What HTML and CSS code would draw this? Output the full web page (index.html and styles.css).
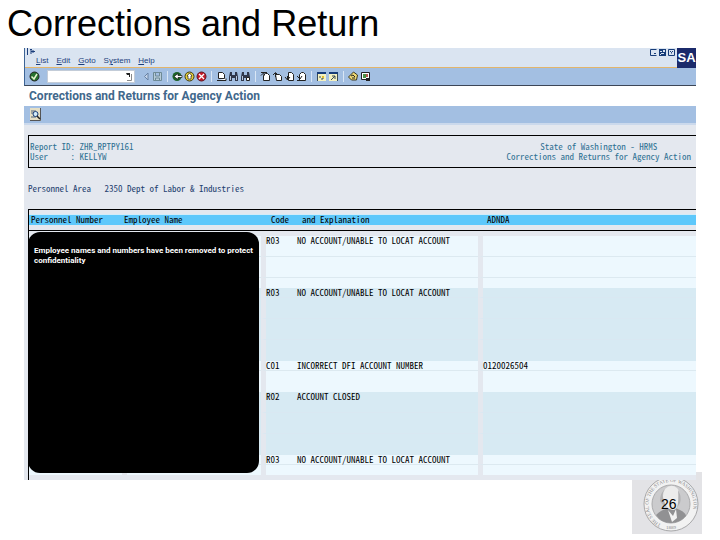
FILE: index.html
```html
<!DOCTYPE html>
<html lang="en">
<head>
    <meta charset="UTF-8">
    <meta name="viewport" content="width=device-width, initial-scale=1.0">
    <title>Corrections and Return</title>
    <link rel="stylesheet" href="styles.css">
</head>
<body>
    <h1 class="slide-title">Corrections and Return</h1>

    <div class="app">
        <div class="top">
            <div class="menu-bar">
                <svg class="menu-icon" viewBox="0 0 10 7"><path d="M1.500 0v7M4 1.500h2M5 3.500h4M5 2v4M7 2v3" stroke="#1d3f7c" fill="none"/></svg>
                <nav class="menu">
                    <a href="#"><u>L</u>ist</a>
                    <a href="#"><u>E</u>dit</a>
                    <a href="#"><u>G</u>oto</a>
                    <a href="#">S<u>y</u>stem</a>
                    <a href="#"><u>H</u>elp</a>
                </nav>
            </div>
            <div class="window-buttons">
                <button aria-label="Minimize"><svg viewBox="0 0 7 7"><path d="M6.500 .5h-6v6h6M4 4.500h2" stroke="#173c78" fill="none"/></svg></button>
                <button aria-label="Restore"><svg viewBox="0 0 7 7"><path d="M0 0h7v7H0z" fill="#173c78"/><path d="M1 2h2v1H1zM4 1h2v2H4zM2 4h3v1H2zM1 5h1v1H1z" fill="#dae4f1"/></svg></button>
                <button aria-label="Close"><svg viewBox="0 0 7 7"><path d="M.5.5h6v6h-6zM2 2l1.500 1.500L5 2M3.500 3.500v1" stroke="#173c78" fill="none"/></svg></button>
            </div>
            <div class="logo">SA</div>
        </div>

        <div class="toolbar">
            <button aria-label="Enter"><svg viewBox="0 0 11 11"><circle cx="5.500" cy="5.500" r="4.500" fill="#26722f" stroke="#222"/><path d="M2.500 5.500l2.500 2.500 3-5" stroke="#e8f4d0" stroke-width="1.500" fill="none"/></svg></button>
            <div class="command">
                <input type="text" aria-label="Command">
                <svg viewBox="0 0 6 8"><path d="M0 0h4v4H3V2H1z" fill="#222"/><path d="M5.500 1v6.500H1" stroke="#888" fill="none"/></svg>
            </div>
            <div class="group back-group">
                <button aria-label="Collapse"><svg viewBox="0 0 11 11"><path d="M8 2v7L4.500 5.500z" fill="#c5d5ea" stroke="#6882a4"/></svg></button>
                <button aria-label="Save"><svg viewBox="0 0 11 11"><path d="M1.500 1.500h8v8h-8zM3.500 2v3h4V2M3.500 9V7h4v2" fill="#b7cbd8" stroke="#6d8a96"/></svg></button>
            </div>
            <div class="group">
                <button aria-label="Back"><svg viewBox="0 0 11 11"><circle cx="5" cy="5.500" r="4.500" fill="#1d6328"/><path d="M2 5.500l4-3v2h4v2H6v2z" fill="#fff" stroke="#111" stroke-width=".7"/></svg></button>
                <button aria-label="Exit"><svg viewBox="0 0 11 11"><circle cx="5.500" cy="5.500" r="4.500" fill="#e6cf3a" stroke="#3c3813"/><path d="M3 5l2.500-3L8 5H7v3H4V5z" fill="#fff" stroke="#222" stroke-width=".7"/></svg></button>
                <button aria-label="Cancel"><svg viewBox="0 0 11 11"><circle cx="5.500" cy="5.500" r="4.500" fill="#c41c2b" stroke="#5d1520"/><path d="M3 3l5 5M8 3L3 8" stroke="#fff" stroke-width="1.300"/></svg></button>
            </div>
            <div class="group">
                <button aria-label="Print"><svg viewBox="0 0 11 11"><path d="M2.500 1.500h4l2 2v4h-6zM1 9.500h9v-2" fill="#fff" stroke="#222"/></svg></button>
                <button aria-label="Find"><svg viewBox="0 0 11 11"><path d="M2 1h2v3h3V1h2l1 5v4H7V7H4v3H1V6z" fill="#30384c"/><path d="M2.500 5v4M8.500 5v4" stroke="#b9c9dd"/></svg></button>
                <button aria-label="Find next"><svg viewBox="0 0 11 11"><path d="M2 1h2v3h3V1h2l1 5v1H4v3H1V6z" fill="#30384c"/><path d="M2.500 5v4" stroke="#b9c9dd"/><path d="M6.500 6.500h3v3h-3z" fill="#fff" stroke="#222"/></svg></button>
            </div>
            <div class="group">
                <button aria-label="First page"><svg viewBox="0 0 11 11"><path d="M3.500 4.500l2-2h2l2 2v5h-6z" fill="#fff" stroke="#222"/><path d="M1 4.500l3-3M1 1.500h6M4 1v4" stroke="#222" fill="none"/></svg></button>
                <button aria-label="Previous page"><svg viewBox="0 0 11 11"><path d="M3.500 3.500h4l2 2v4h-5z" fill="#fff" stroke="#222"/><path d="M1 4l2.500-2.500L6 4M3.500 2v4" stroke="#222" fill="none"/></svg></button>
                <button aria-label="Next page"><svg viewBox="0 0 11 11"><path d="M4.500 1.500h3l2 2v6h-5z" fill="#fff" stroke="#222"/><path d="M1 6l2.500 3L6 6M3.500 5v4" stroke="#222" fill="none"/></svg></button>
                <button aria-label="Last page"><svg viewBox="0 0 11 11"><path d="M3.500 3.500l2-2h2l2 2v6h-6z" fill="#fff" stroke="#222"/><path d="M1 5l3 3 2-3M1 9.500h5" stroke="#222" fill="none"/></svg></button>
            </div>
            <div class="group">
                <button aria-label="New session"><svg viewBox="0 0 11 11"><path d="M1 1h9v9H1z" fill="#f4f1c0"/><path d="M1 1h9v2H1z" fill="#173c78"/><path d="M1.500 3v7M3 6h2M7 5v3M5 8h2" stroke="#3b4a55"/><path d="M6 5h2v2H6z" fill="#e0bf2c"/></svg></button>
                <button aria-label="Create shortcut"><svg viewBox="0 0 11 11"><path d="M1 1h9v9H1z" fill="#f4f1c0"/><path d="M1 1h9v2H1z" fill="#173c78"/><path d="M9.500 3v7M3 9l4-4M4 5h3v3" stroke="#3b4a55" fill="none"/></svg></button>
            </div>
            <div class="group">
                <button aria-label="Help"><svg viewBox="0 0 11 11"><path d="M5.500 1l4 3-1 5h-5l-3-3z" fill="#eed874" stroke="#3b3820"/><path d="M3 5l2-1 2 2M4 7h3" stroke="#222" fill="none"/></svg></button>
                <button aria-label="Layout"><svg viewBox="0 0 11 11"><path d="M1.500 1.500h8v7h-8z" fill="#fff" stroke="#222"/><path d="M3 3h3v4H3z" fill="#4a9145"/><path d="M6 3h2v3H6z" fill="#b55b50"/><path d="M6 7h4v3H6z" fill="#222"/></svg></button>
            </div>
        </div>

        <h2 class="screen-title">Corrections and Returns for Agency Action</h2>

        <div class="action-bar">
            <button aria-label="Details"><svg viewBox="0 0 11 13"><path d="M0 0h11v13H0z" fill="#e5dfc5"/><path d="M0 12.500h10.500V0" stroke="#555" fill="none"/><path d="M1 3h5M1 5h2M1 9h5" stroke="#53677d"/><circle cx="5.500" cy="6" r="2.500" fill="#d2ebf8" stroke="#173c78"/><path d="M7 8l3 3" stroke="#222" stroke-width="1.500"/></svg></button>
        </div>

        <div class="report">
            <div class="report-head">
                <pre>Report ID: ZHR_RPTPY161
User     : KELLYW</pre>
                <pre class="centered">State of Washington - HRMS
Corrections and Returns for Agency Action</pre>
            </div>

            <pre class="area">Personnel Area   2350 Dept of Labor &amp; Industries</pre>

            <div class="list">
                <table>
                    <colgroup>
                        <col class="col-number">
                        <col class="col-name">
                        <col class="col-code">
                        <col class="col-text">
                        <col>
                    </colgroup>
                    <thead>
                        <tr><th>Personnel Number</th><th>Employee Name</th><th>Code</th><th>and Explanation</th><th>ADNDA</th></tr>
                    </thead>
                    <tbody class="light first">
                        <tr class="tall"><td></td><td></td><td>R03</td><td>NO ACCOUNT/UNABLE TO LOCAT ACCOUNT</td><td></td></tr>
                        <tr class="tall"><td></td><td></td><td></td><td></td><td></td></tr>
                        <tr><td></td><td></td><td></td><td></td><td></td></tr>
                    </tbody>
                    <tbody class="dark">
                        <tr><td></td><td></td><td>R03</td><td>NO ACCOUNT/UNABLE TO LOCAT ACCOUNT</td><td></td></tr>
                        <tr class="tall"><td></td><td></td><td></td><td></td><td></td></tr>
                        <tr class="tall"><td></td><td></td><td></td><td></td><td></td></tr>
                        <tr class="tall"><td></td><td></td><td></td><td></td><td></td></tr>
                    </tbody>
                    <tbody class="light">
                        <tr><td></td><td></td><td>C01</td><td>INCORRECT DFI ACCOUNT NUMBER</td><td>0120026504</td></tr>
                        <tr class="tall"><td></td><td></td><td></td><td></td><td></td></tr>
                    </tbody>
                    <tbody class="dark">
                        <tr class="tall"><td></td><td></td><td>R02</td><td>ACCOUNT CLOSED</td><td></td></tr>
                        <tr class="tall"><td></td><td></td><td></td><td></td><td></td></tr>
                        <tr class="tall"><td></td><td></td><td></td><td></td><td></td></tr>
                    </tbody>
                    <tbody class="light">
                        <tr><td></td><td></td><td>R03</td><td>NO ACCOUNT/UNABLE TO LOCAT ACCOUNT</td><td></td></tr>
                        <tr><td></td><td></td><td></td><td></td><td></td></tr>
                    </tbody>
                </table>
                <div class="redacted">Employee names and numbers have been removed to protect confidentiality</div>
            </div>
        </div>
    </div>

    <div class="slide-number">
        <svg class="seal" viewBox="0 0 70 62">
            <circle cx="39" cy="32" r="27" fill="#f2f2f2" stroke="#a8a8aa"/>
            <circle cx="39" cy="32" r="19" fill="#cbcbcd" stroke="#aaaaac"/>
            <path id="ring" d="M29 52.500a22.500 22.500 0 1 1 20 0" fill="none"/>
            <text class="seal-text"><textPath href="#ring">THE SEAL OF THE STATE OF WASHINGTON</textPath></text>
            <text class="seal-text" x="34" y="57">1889</text>
            <path d="M24 43q5-5 10-6l9-1q10 3 11 8-6 7-15 7-10 0-15-8z" fill="#919193"/>
            <path d="M33 17q6-6 12-1 4 4 2 12-1 8-5 10-6 0-9-6-4-9 0-15z" fill="#ececec"/>
            <path d="M33 17q-4 5-1 12l2 5q-4-1-6-5 0-8 5-12zM46 18q4 6 2 13l-3 5q2-7 1-18z" fill="#b2b2b4"/>
            <path d="M36 38l5 6 3-7 1 9-5 4z" fill="#f2f2f2"/>
        </svg>
        <span>26</span>
    </div>
</body>
</html>
```
FILE: styles.css
```css
* {
    box-sizing: border-box;
}

body {
    margin: 0;
    background-color: #fff;
    font-family: "Liberation Sans", Arial, sans-serif;
}

button {
    display: block;
    padding: 0;
    border: none;
    background: none;
}

svg {
    display: block;
}

.slide-title {
    margin: 0;
    padding: 2px 7px;
    font-size: 36px;
    font-weight: normal;
    line-height: 44px;
    color: #000;
}

.app {
    position: relative;
    z-index: 1;
    margin: 0 24px;
    background-color: #e4e8ef;
}

/* menu bar and toolbar */
.top {
    display: flex;
    height: 20px;
    background-color: #dae4f1;
    border-left: 1px solid #3d6496;
}

.menu-bar {
    flex: 1;
    border-bottom: 1px solid #e2b56c;
}

.menu-icon {
    width: 10px;
    height: 7px;
    margin-left: 1px;
}

.menu {
    display: flex;
    gap: 8px;
    padding-left: 11px;
    font-size: 8px;
    line-height: 12px;
}

.menu a {
    color: #1d3f7c;
    text-decoration: none;
}

.window-buttons {
    display: flex;
    align-items: flex-start;
    gap: 2px;
    padding: 1px 2px 0 0;
    border-bottom: 1px solid #e2b56c;
}

.window-buttons svg {
    width: 7px;
    height: 7px;
}

.logo {
    width: 19px;
    background-color: #1b2a6b;
    color: #fff;
    font-size: 13px;
    font-weight: bold;
    line-height: 19px;
    text-align: center;
}

.toolbar {
    display: flex;
    align-items: center;
    height: 18px;
    padding-left: 4px;
    background-color: #a3bfe2;
    border-left: 1px solid #3d6496;
    border-bottom: 1px solid #3c4656;
}

.toolbar button svg {
    width: 11px;
    height: 11px;
}

.command {
    display: flex;
    align-items: center;
    width: 88px;
    height: 13px;
    margin-left: 7px;
    padding-right: 2px;
    background-color: #fff;
    border: 1px solid #c3ccd8;
}

.command input {
    flex: 1;
    min-width: 0;
    height: 10px;
    padding: 0;
    border: none;
    outline: none;
    font-size: 9px;
}

.command svg {
    width: 6px;
    height: 8px;
}

.group {
    display: flex;
    gap: 1px;
    padding-left: 4px;
    margin-left: 4px;
    border-left: 1px solid #d9e6f5;
}

.back-group {
    border-left: none;
    margin-left: 0;
    padding-left: 5px;
}

.screen-title {
    margin: 0;
    padding-left: 5px;
    background-color: #fff;
    color: #41688c;
    font-family: Roboto, "Liberation Sans", sans-serif;
    font-size: 12px;
    font-weight: bold;
    line-height: 20px;
}

.action-bar {
    height: 19px;
    padding: 2px 6px;
    background-color: #a3bfe2;
    border-bottom: 2px solid #cbd9ec;
}

.action-bar svg {
    width: 11px;
    height: 13px;
}

/* report list */
.report {
    padding: 10px 0 0 4px;
    color: #000;
    font-family: "Noto Sans CJK JP", "Liberation Mono", monospace;
    font-feature-settings: "hwid";
    font-size: 9px;
    line-height: 10px;
}

.report pre {
    margin: 0;
    font: inherit;
}

.report-head {
    display: flex;
    justify-content: space-between;
    height: 33px;
    padding: 6px 5px 0 1px;
    border: 1px solid #000;
    border-right: none;
    color: #2f7193;
}

.report .centered {
    text-align: center;
}

.report .area {
    padding: 16px 0 15px;
    color: #1f3f6f;
}

.list {
    position: relative;
    padding-bottom: 5px;
    border-left: 1px solid #000;
}

table {
    width: 100%;
    table-layout: fixed;
    border-spacing: 0;
}

.col-number {
    width: 93px;
}

.col-name {
    width: 139px;
}

.col-code {
    width: 36px;
}

.col-text {
    width: 181px;
}

th {
    height: 22px;
    padding: 0 0 0 2px;
    border-top: 1px solid #000;
    border-bottom: 1px solid #000;
    background: linear-gradient(#e4e8ef 4px, #d3ecf8 4px, #d3ecf8 5px, #5ec8fb 5px, #5ec8fb 15px, #e4e8ef 15px);
    font-weight: normal;
    text-align: left;
    white-space: nowrap;
}

th:nth-child(3) {
    padding-left: 10px;
}

th:nth-child(4) {
    padding-left: 5px;
}

th:nth-child(5) {
    padding-left: 9px;
}

td {
    height: 10px;
    padding: 0;
    border-bottom: 1px solid #dce9f0;
    vertical-align: top;
    white-space: nowrap;
    line-height: 9px;
}

.tall td {
    height: 21px;
}

.light td {
    background-color: #edf8fe;
}

.dark td {
    background-color: #d7eaf3;
    border-bottom-color: #d9e8f2;
}

tbody tr:last-child td {
    border-bottom: none;
}

td:nth-child(2),
td:nth-child(3),
td:nth-child(5) {
    border-left: 5px solid #e4e8ef;
}

.first tr:first-child td {
    height: 26px;
    border-top: 5px solid #e4e8ef;
}

.redacted {
    position: absolute;
    top: 23px;
    left: -1px;
    width: 231px;
    height: 241px;
    padding: 14px 0 0 6px;
    border-radius: 12px;
    background-color: #000;
    color: #fff;
    font-family: Roboto, "Liberation Sans", sans-serif;
    font-feature-settings: normal;
    font-size: 8px;
    font-weight: bold;
}

/* slide number over the state seal */
.slide-number {
    position: absolute;
    right: 18px;
    top: 472px;
    width: 70px;
    background-color: #e3e3e6;
}

.seal {
    width: 100%;
}

.seal-text {
    font-family: "Liberation Serif", serif;
    font-size: 5px;
    fill: #88888a;
}

.slide-number span {
    position: absolute;
    left: 29px;
    top: 24px;
    font-size: 14px;
    line-height: 16px;
    color: #000;
}
```
